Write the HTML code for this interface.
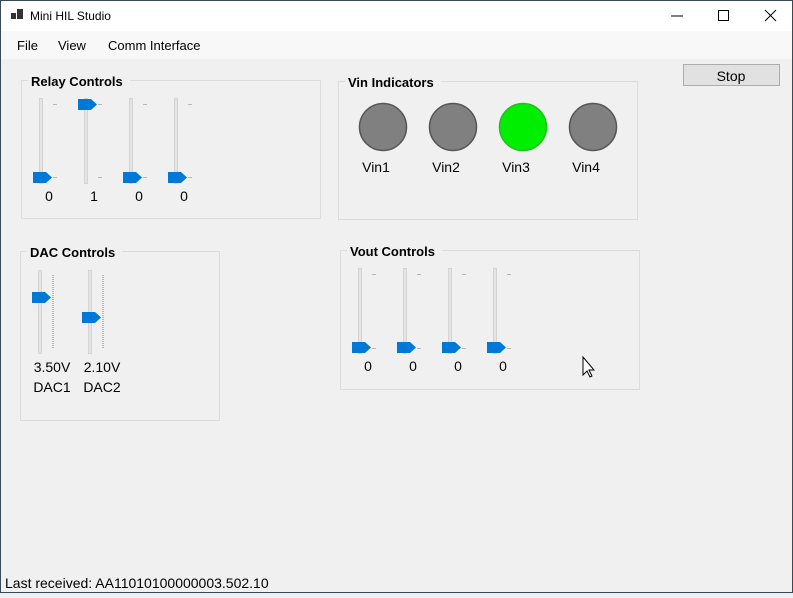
<!DOCTYPE html>
<html><head><style>
body{margin:0;width:793px;height:593px;overflow:hidden;background:#f0f0f0;font-family:"Liberation Sans",sans-serif;}
</style></head><body>
<svg width="793" height="593" xmlns="http://www.w3.org/2000/svg" font-family="Liberation Sans, sans-serif">
<defs>
<g id="th"><path d="M0 0h13l6 5.5-6 5.5H0z" fill="#0078d7"/></g>
</defs>
<rect width="793" height="593" fill="#f0f0f0"/>
<rect width="793" height="31" fill="#fff"/>
<rect y="31" width="793" height="28" fill="#f8f8f8"/>
<rect x="0.5" y="0.5" width="792" height="592" fill="none" stroke="#3a4a55"/>
<rect x="11" y="13" width="5" height="6" fill="#333"/><rect x="17" y="9" width="6" height="10" fill="#333"/>
<text x="30" y="20" font-size="12" fill="#000">Mini HIL Studio</text>
<line x1="671" y1="16" x2="683" y2="16" stroke="#000"/>
<rect x="718.5" y="10.5" width="10" height="10" fill="none" stroke="#000"/>
<path d="M765 10l11 11M776 10l-11 11" stroke="#000"/>
<text x="17" y="50" font-size="13">File</text>
<text x="58" y="50" font-size="13">View</text>
<text x="108" y="50" font-size="13">Comm Interface</text>
<g fill="none" stroke="#dcdcdc">
<rect x="21.5" y="80.5" width="299" height="138"/>
<rect x="338.5" y="81.5" width="299" height="138"/>
<rect x="20.5" y="251.5" width="199" height="169"/>
<rect x="340.5" y="250.5" width="299" height="139"/>
</g>
<g font-size="13" font-weight="bold">
<rect x="28" y="74" width="102" height="14" fill="#f0f0f0"/><text x="31" y="86">Relay Controls</text>
<rect x="345" y="75" width="96" height="14" fill="#f0f0f0"/><text x="348" y="87">Vin Indicators</text>
<rect x="27" y="245" width="95" height="14" fill="#f0f0f0"/><text x="30" y="257">DAC Controls</text>
<rect x="347" y="244" width="95" height="14" fill="#f0f0f0"/><text x="350" y="256">Vout Controls</text>
</g>
<g fill="#e4e4e4" stroke="#d4d4d4">
<rect x="39.5" y="98.5" width="3" height="85"/><rect x="84.5" y="98.5" width="3" height="85"/><rect x="129.5" y="98.5" width="3" height="85"/><rect x="174.5" y="98.5" width="3" height="85"/>
</g>
<g stroke="#b8b8b8">
<path d="M53 104.5h4M53 177.5h4M98 104.5h4M98 177.5h4M143 104.5h4M143 177.5h4M188 104.5h4M188 177.5h4"/>
</g>
<use href="#th" x="33" y="172"/><use href="#th" x="78" y="99"/><use href="#th" x="123" y="172"/><use href="#th" x="168" y="172"/>
<g font-size="14" text-anchor="middle">
<text x="49" y="201">0</text><text x="94" y="201">1</text><text x="139" y="201">0</text><text x="184" y="201">0</text>
</g>
<g stroke="#555" stroke-width="1.5">
<circle cx="383" cy="127" r="23.5" fill="#808080"/>
<circle cx="453" cy="127" r="23.5" fill="#808080"/>
<circle cx="523" cy="127" r="23.5" fill="#00ee00" stroke="#20c020"/>
<circle cx="593" cy="127" r="23.5" fill="#808080"/>
</g>
<g font-size="14" text-anchor="middle">
<text x="376" y="172">Vin1</text><text x="446" y="172">Vin2</text><text x="516" y="172">Vin3</text><text x="586" y="172">Vin4</text>
</g>
<rect x="683.5" y="64.5" width="96" height="21" fill="#e1e1e1" stroke="#adadad"/>
<text x="731" y="81" font-size="14" text-anchor="middle">Stop</text>
<g fill="#e4e4e4" stroke="#d4d4d4"><rect x="38.5" y="270.5" width="3" height="83"/><rect x="88.5" y="270.5" width="3" height="83"/></g>
<g stroke="#b8b8b8" stroke-width="2" stroke-dasharray="1 1"><path d="M53 275v74M103 275v74"/></g>
<use href="#th" x="32" y="292"/><use href="#th" x="82" y="312"/>
<g font-size="14" text-anchor="middle">
<text x="52" y="372">3.50V</text><text x="102" y="372">2.10V</text>
<text x="52" y="392">DAC1</text><text x="102" y="392">DAC2</text>
</g>
<g fill="#e4e4e4" stroke="#d4d4d4">
<rect x="358.5" y="268.5" width="3" height="85"/><rect x="403.5" y="268.5" width="3" height="85"/><rect x="448.5" y="268.5" width="3" height="85"/><rect x="493.5" y="268.5" width="3" height="85"/>
</g>
<g stroke="#b8b8b8">
<path d="M372 274.5h4M372 348.5h4M417 274.5h4M417 348.5h4M462 274.5h4M462 348.5h4M507 274.5h4M507 348.5h4"/>
</g>
<use href="#th" x="352" y="342"/><use href="#th" x="397" y="342"/><use href="#th" x="442" y="342"/><use href="#th" x="487" y="342"/>
<g font-size="14" text-anchor="middle">
<text x="368" y="371">0</text><text x="413" y="371">0</text><text x="458" y="371">0</text><text x="503" y="371">0</text>
</g>
<path d="M583 357v18l4-4 3 6 2-1-3-6h5z" fill="#fff" stroke="#000"/>
<text x="5" y="588" font-size="14">Last received: AA11010100000003.502.10</text>
</svg>
</body></html>
